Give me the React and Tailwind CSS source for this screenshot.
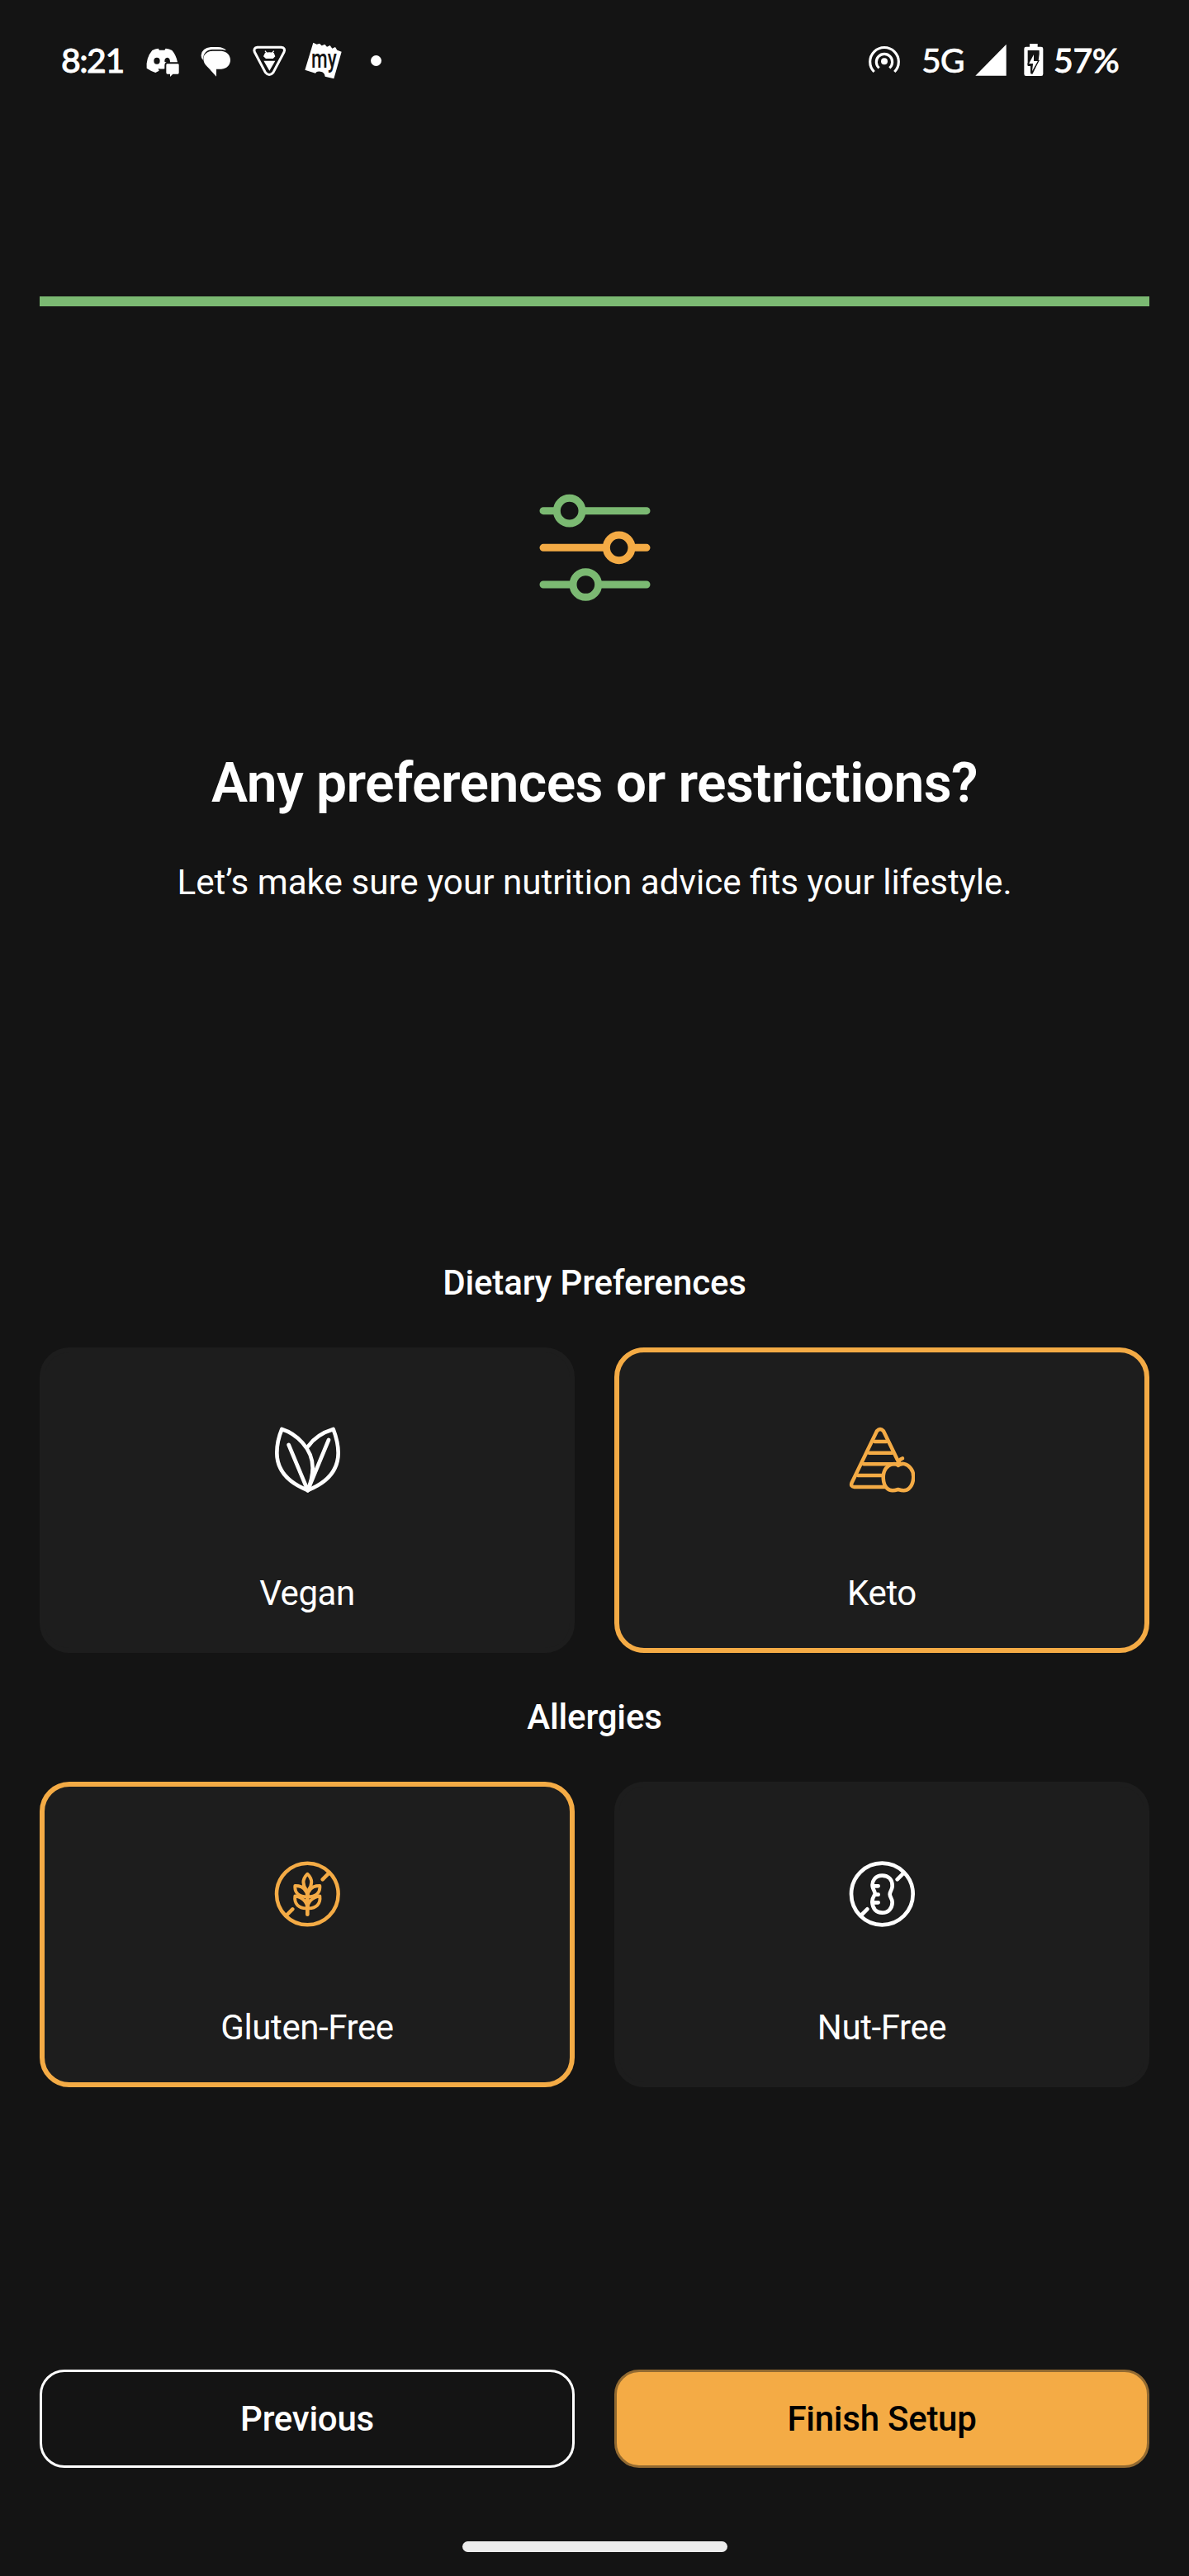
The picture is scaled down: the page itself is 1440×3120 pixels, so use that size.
import React from "react";

function DiscordIcon() {
  return (
    <svg className="ml-[29px] h-[46px] w-[42px] shrink-0" viewBox="408 60 126 138" fill="#fff">
      <path
        fillRule="evenodd"
        d="M433 93 Q444 87 455 86 L459 92 H478 L482 86 Q495 87 505 93 Q520 110 525 136 H485 Q478 138 478 146 V160 Q466 162 455 159 L458 167 L445 174 Q426 167 413 158 Q410 120 433 93 Z M450 119 A11 12 0 1 0 450 143 A11 12 0 1 0 450 119 Z M488 119 Q477 120 478 134 L481 136 H498 Q498 120 488 119 Z"
      />
      <path d="M488 142 H526 Q530 142 530 146 V174 Q530 179 526 179 H508 L498 189 V179 H488 Q484 179 484 174 V146 Q484 142 488 142 Z" />
    </svg>
  );
}

function ChatIcon() {
  return (
    <svg className="ml-[24px] h-[46px] w-[39px] shrink-0" viewBox="606 60 117 138" fill="#fff">
      <path d="M646 81 H672 Q692 82 702 93 Q690 90 676 90 H650 Q622 92 618 120 L617 128 Q610 120 611 110 Q614 84 646 81 Z" />
      <path d="M652 95 H684 C728 98 728 158 684 161 H666 V188 L633 152 C608 130 618 97 652 95 Z" />
    </svg>
  );
}

function BeeBadgeIcon() {
  return (
    <svg className="ml-[24px] h-[46px] w-[42px] shrink-0" viewBox="795 60 126 138" fill="none">
      <path
        d="M815 82 H902 Q918 84 912 99 L873 173 Q858 190 844 173 L805 99 Q800 84 815 82 Z"
        stroke="#fff"
        strokeWidth="9"
        strokeLinejoin="round"
      />
      <path d="M843 95 L850 104 M875 95 L868 104" stroke="#fff" strokeWidth="4" />
      <path d="M843 102 Q859 98 875 102 L880 115 L872 123 H846 L837 115 Z M838 131 H880 L859 167 Z" fill="#fff" />
    </svg>
  );
}

function TicketIcon() {
  return (
    <svg className="ml-[21px] h-[46px] w-[47px] shrink-0 overflow-visible" viewBox="984 60 141 138">
      <path
        fill="#fff"
        d="M1018 65 L1031 71 L1041 68 L1049 76 L1060 71 L1068 80 L1079 75 L1087 86 L1098 81 L1105 92 L1121 98 L1093 196 L1061 188 Q1059 171 1044 170 Q1030 168 1026 176 L988 164 Z"
      />
      <text
        x="1011"
        y="155"
        fontFamily="Roboto, sans-serif"
        fontSize="96"
        fontWeight="500"
        fill="#141414"
        textLength="92"
        lengthAdjust="spacingAndGlyphs"
      >
        my
      </text>
    </svg>
  );
}

function HotspotIcon() {
  return (
    <svg className="h-[46px] w-[40px] shrink-0" viewBox="90 60 120 138" fill="none" stroke="#fff" strokeWidth="9.5">
      <path d="M113 171 A52 52 0 1 1 187 171" />
      <path d="M131 157 A29 29 0 1 1 169 157" />
      <circle cx="150" cy="133" r="12" fill="#fff" stroke="none" />
    </svg>
  );
}

function SignalIcon() {
  return (
    <svg className="h-[46px] w-[38px] shrink-0" viewBox="479 60 114 138">
      <path d="M592 71 V185 H480 Z" fill="#fff" />
    </svg>
  );
}

function BatteryIcon() {
  return (
    <svg className="ml-[21px] h-[46px] w-[24px] shrink-0" viewBox="656 60 72 138">
      <path d="M677 69 H706 V80 H719 Q726 80 726 87 V179 Q726 186 719 186 H664 Q657 186 657 179 V87 Q657 80 664 80 H677 Z" fill="#fff" />
      <path d="M670 93 H712 V125 L690 181 L680 175 V150 H670 Z" fill="#141414" />
      <path d="M716 90 V186 H684 L707 139 Z" fill="#fff" />
      <path d="M694 100 L671 143 H687 L683 178 L710 130 H694 Z" fill="#fff" stroke="#141414" strokeWidth="4" />
    </svg>
  );
}

function StatusBar() {
  return (
    <header className="mt-[50px] flex h-[46px] items-center justify-between pl-[74px] pr-[84px] font-[Lato,sans-serif] text-[41px] font-medium leading-[46px]">
      <div className="flex items-center">
        <span className="w-[73px] tracking-[-1.5px] [-webkit-text-stroke:0.8px_white]">8:21</span>
        <DiscordIcon />
        <ChatIcon />
        <BeeBadgeIcon />
        <TicketIcon />
        <span className="ml-[34px] size-[13px] rounded-full bg-white" />
      </div>
      <div className="flex items-center">
        <HotspotIcon />
        <span className="ml-[25px] w-[65px] tracking-[-1px] [-webkit-text-stroke:0.4px_white]">5G</span>
        <SignalIcon />
        <BatteryIcon />
        <span className="ml-[12px] w-[80px] tracking-[-0.4px] [-webkit-text-stroke:0.8px_white]">57%</span>
      </div>
    </header>
  );
}

function SlidersIcon() {
  return (
    <svg className="h-[180px] w-[200px]" viewBox="0 0 600 540" fill="none" strokeWidth="27" strokeLinecap="round">
      <g stroke="#7bb972">
        <path d="M114 146 H150 M268 146 H489" />
        <circle cx="209" cy="146" r="46" />
        <path d="M114 414 H210 M327 414 H489" />
        <circle cx="268" cy="414" r="46" />
      </g>
      <g stroke="#f4ab45">
        <path d="M114 280 H330 M448 280 H489" />
        <circle cx="389" cy="280" r="46" />
      </g>
    </svg>
  );
}

const strokeProps = {
  className: "size-[80px]",
  fill: "none",
  stroke: "currentColor",
  strokeLinecap: "round",
  strokeLinejoin: "round",
};

function VeganIcon() {
  return (
    <svg {...strokeProps} viewBox="66 55 240 240" strokeWidth="14">
      <path d="M94 64 C145 80 206 133 206 204 C206 235 198 262 188 286 C128 262 76 222 76 150 C76 118 84 88 94 64 Z" />
      <path d="M190 126 C210 97 242 76 281 64 C290 88 299 118 299 150 C299 222 248 262 188 286" />
      <path d="M119 121 L188 286 M264 103 L188 286" />
    </svg>
  );
}

function KetoIcon() {
  return (
    <svg {...strokeProps} viewBox="54 55 240 240" strokeWidth="13.5">
      <path d="M186 274 H74 Q59 273 65 258 L156 71 Q168 57 180 71 L235 184" />
      <path d="M148 109 H190 M128 150 H211 M108 191 H244 M87 232 H178" />
      <path d="M234 196 C221 184 201 192 189 206 C174 226 177 264 193 279 C206 291 220 287 233 283 C247 287 261 291 273 279 C290 263 295 226 279 206 C266 190 246 184 234 196 Z" />
      <path d="M233 190 Q235 174 249 170" />
    </svg>
  );
}

function GlutenFreeIcon() {
  return (
    <svg {...strokeProps} viewBox="66 58 240 240" strokeWidth="13.5">
      <circle cx="187" cy="178" r="112" />
      <path d="M265 102 L242 125 M133 233 L110 256" />
      <g strokeWidth="11.5">
        <path d="M187 252 V182" strokeWidth="14" />
        <path d="M187 105 C167 125 167 145 187 168 C207 145 207 125 187 105 Z" />
        <path d="M187 188 C185 160 170 148 142 148 C140 174 155 188 187 188 Z" />
        <path d="M187 188 C189 160 204 148 232 148 C234 174 219 188 187 188 Z" />
        <path d="M187 230 C185 204 170 190 142 185 C138 214 155 232 187 230 Z" />
        <path d="M187 230 C189 204 204 190 232 185 C236 214 219 232 187 230 Z" />
      </g>
    </svg>
  );
}

function NutFreeIcon() {
  return (
    <svg {...strokeProps} viewBox="54 58 240 240" strokeWidth="14">
      <circle cx="175" cy="178" r="112" />
      <path d="M253 102 L230 125 M121 233 L98 256" />
      <path d="M175 111 C150 111 138 130 140 149 C142 165 152 170 148 180 C142 190 138 196 139 208 C141 232 154 246 175 246 C198 246 212 230 212 208 C212 194 203 190 203 179 C203 168 212 163 212 148 C212 127 199 111 175 111 Z" />
      <path d="M142 149 H161 M150 180 H161 M142 209 H161" />
    </svg>
  );
}

function OptionCard({ icon, label, selected }) {
  return (
    <button
      type="button"
      className={`flex h-[370px] flex-col items-center rounded-[36px] border-[6px] bg-[#1d1d1d] pt-[90px] ${
        selected ? "border-[#f4ab45]" : "border-[#1d1d1d]"
      }`}
    >
      <span className={selected ? "text-[#f4ab45]" : "text-white"}>{icon}</span>
      <span className="mt-[94px] text-[42px] leading-[56px] tracking-[-0.4px]">{label}</span>
    </button>
  );
}

export default function App() {
  return (
    <div className="flex h-[3120px] w-[1440px] flex-col overflow-hidden bg-[#141414] font-[Roboto,sans-serif] text-white">
      <StatusBar />
      <div className="mx-[48px] mt-[263px] h-[12px] shrink-0 bg-[#7bb972]" />
      <main className="flex flex-col items-center px-[48px]">
        <div className="mt-[199px]">
          <SlidersIcon />
        </div>
        <h1 className="mt-[159px] text-[66px] font-semibold leading-[80px] tracking-[-0.58px]">
          Any preferences or restrictions?
        </h1>
        <p className="mt-[52px] text-[42.2px] leading-[56px]">Let’s make sure your nutrition advice fits your lifestyle.</p>
        <h2 className="mt-[429px] text-[42px] font-medium leading-[56px] tracking-[-0.15px]">Dietary Preferences</h2>
        <div className="mt-[50px] grid w-full grid-cols-2 gap-12">
          <OptionCard icon={<VeganIcon />} label="Vegan" />
          <OptionCard icon={<KetoIcon />} label="Keto" selected />
        </div>
        <h2 className="mt-[50px] text-[42px] font-medium leading-[56px] tracking-[-0.15px]">Allergies</h2>
        <div className="mt-[50px] grid w-full grid-cols-2 gap-12">
          <OptionCard icon={<GlutenFreeIcon />} label="Gluten-Free" selected />
          <OptionCard icon={<NutFreeIcon />} label="Nut-Free" />
        </div>
      </main>
      <footer className="mt-auto flex flex-col items-center px-[48px] pb-[29px]">
        <div className="grid w-full grid-cols-2 gap-12">
          <button
            type="button"
            className="h-[119px] rounded-[30px] border-[3px] border-white text-[42px] font-medium tracking-[-0.25px]"
          >
            Previous
          </button>
          <button
            type="button"
            className="h-[119px] rounded-[30px] border-[3px] border-[#926a31] bg-[#f4ab45] text-[42px] font-medium tracking-[-0.25px] text-black"
          >
            Finish Setup
          </button>
        </div>
        <div className="mt-[89px] h-[13px] w-[321px] rounded-full bg-[#ececec]" />
      </footer>
    </div>
  );
}
